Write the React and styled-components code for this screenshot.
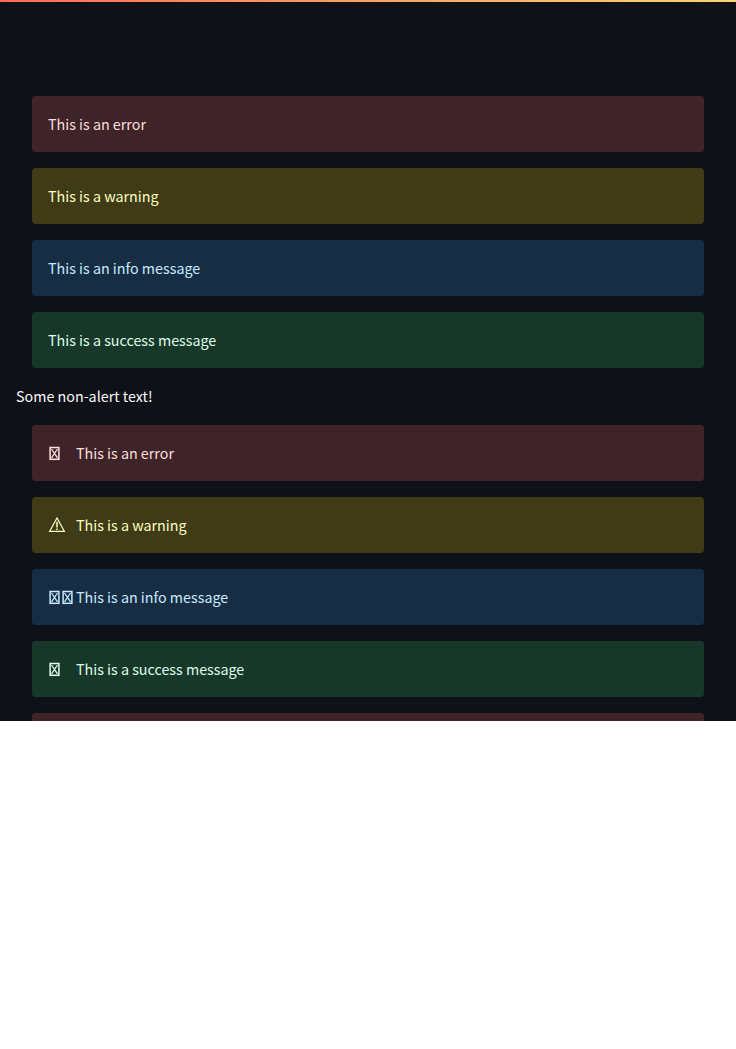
import React from "react";
import styled, { createGlobalStyle } from "styled-components";

const GlobalStyle = createGlobalStyle`
  * { box-sizing: border-box; }
  html { background: #fff; }
  body { margin: 0; }
`;

const tones = {
  error: { background: "#3e2428", color: "#ffdede" },
  warning: { background: "#3e3b16", color: "#ffffc2" },
  info: { background: "#172d43", color: "#c7ebff" },
  success: { background: "#173829", color: "#dffde9" },
};

const AppView = styled.div`
  height: 721px;
  overflow: hidden;
  background: #0e1117;
  color: #fafafa;
  font-family: "Source Sans Pro", "Noto Sans CJK SC", sans-serif;
  font-size: 14.3px;
  line-height: 26px;
`;

const Decoration = styled.div`
  height: 2px;
  background: linear-gradient(90deg, #ff6c56, #fcd66e);
`;

const Main = styled.main`
  display: flex;
  flex-direction: column;
  gap: 16px;
  padding: 94px 16px 0;
`;

const Alert = styled.div`
  display: flex;
  flex-shrink: 0;
  align-items: center;
  gap: 8px;
  height: 56px;
  margin: 0 16px;
  padding: 0 16px;
  border-radius: 4px;
  background: ${({ $tone }) => tones[$tone].background};
  color: ${({ $tone }) => tones[$tone].color};
`;

const AlertIcon = styled.span`
  display: flex;
  flex: none;
  width: 20px;
  height: 20px;
`;

const IconDrawing = styled.svg`
  flex: none;
  overflow: visible;
  fill: none;
  stroke: currentColor;
`;

const PlainText = styled.p`
  height: 25px;
  margin: 0;
  line-height: 24px;
`;

function BoxIcon({ count = 1 }) {
  return (
    <IconDrawing width={count * 13} height="20" aria-hidden="true">
      {Array.from({ length: count }, (_, index) => (
        <g key={index} transform={`translate(${index * 13} 0)`}>
          <rect x="2.1" y="4.5" width="8.8" height="11.8" strokeWidth="1.5" />
          <path d="M3.5 6 9.5 14.9M9.5 6 3.5 14.9" strokeWidth="1.3" />
        </g>
      ))}
    </IconDrawing>
  );
}

function WarningIcon() {
  return (
    <IconDrawing width="20" height="20" aria-hidden="true">
      <path d="M9 3 1.6 16.4H16.4Z" strokeWidth="1.15" />
      <path d="M9 6.7V12.4M9 13.6V15" strokeWidth="1.5" />
    </IconDrawing>
  );
}

const messages = [
  { tone: "error", icon: <BoxIcon />, text: "This is an error" },
  { tone: "warning", icon: <WarningIcon />, text: "This is a warning" },
  { tone: "info", icon: <BoxIcon count={2} />, text: "This is an info message" },
  { tone: "success", icon: <BoxIcon />, text: "This is a success message" },
];

export default function App() {
  return (
    <>
      <GlobalStyle />
      <AppView>
        <Decoration />
        <Main>
          {messages.map(({ tone, text }) => (
            <Alert key={tone} $tone={tone} role="alert">{text}</Alert>
          ))}
          <PlainText>Some non-alert text!</PlainText>
          {messages.map(({ tone, icon, text }) => (
            <Alert key={tone} $tone={tone} role="alert">
              <AlertIcon>{icon}</AlertIcon>
              <span>{text}</span>
            </Alert>
          ))}
          <Alert $tone="error" role="alert" />
        </Main>
      </AppView>
    </>
  );
}
